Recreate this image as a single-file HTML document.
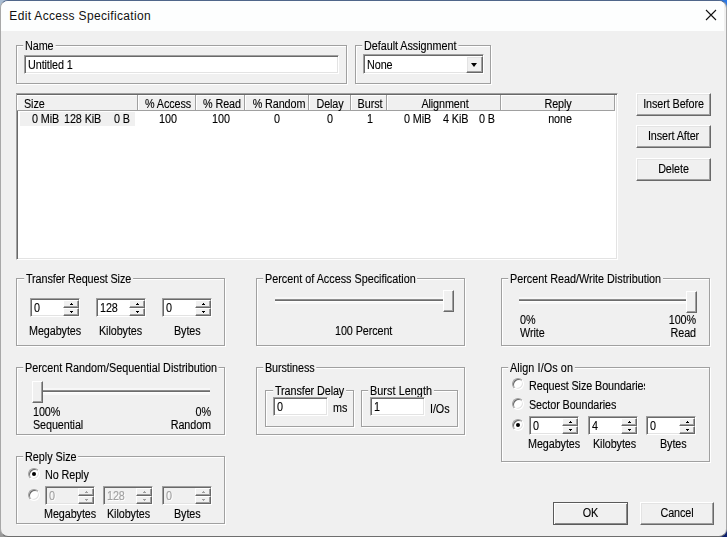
<!DOCTYPE html>
<html><head><meta charset="utf-8"><style>
html,body{margin:0;padding:0;width:727px;height:537px;overflow:hidden;}
body{background:#9a9a9a;position:relative;font-family:"Liberation Sans",sans-serif;}
.q{position:absolute;width:50%;height:50%;}
.win{position:absolute;left:0px;top:0px;width:725px;height:535px;border:1px solid;border-color:#50668a #a8a8a8 #6e6e6e #a8a8a8;border-radius:8px;background:#f0f0f0;overflow:hidden;}
.title{position:absolute;left:0;top:0;width:723px;height:30px;background:#fdfefe;}
.ttext{position:absolute;left:8.3px;top:7px;font-size:12px;line-height:16px;color:#111;letter-spacing:0.33px;white-space:nowrap;}
.abs{position:absolute;}
.t{position:absolute;font-size:12px;line-height:13px;white-space:nowrap;color:#000;letter-spacing:-0.1px;transform:scaleX(0.9);transform-origin:0 0;}
#c{-webkit-text-stroke:0.12px #000;}
#c .gray,#c .dis span{-webkit-text-stroke:0.12px #a0a0a0;}
.t.c{text-align:center;transform-origin:50% 0}.t.r{text-align:right;transform-origin:100% 0}
.grp{position:absolute;border:1px solid #a0a0a0;box-shadow:inset 1px 1px 0 #fff,1px 1px 0 #fff;}
.glab{position:absolute;background:#f0f0f0;padding:0 2px;font-size:12px;line-height:13px;white-space:nowrap;letter-spacing:-0.1px;transform:scaleX(0.9);transform-origin:2px 0;}
.edit{position:absolute;background:#fff;border-top:1px solid #a0a0a0;border-left:1px solid #a0a0a0;border-right:1px solid #fff;border-bottom:1px solid #fff;box-shadow:inset 1px 1px 0 #696969,inset -1px -1px 0 #e3e3e3;}
.edit>span{position:absolute;left:3px;top:3px;font-size:12px;line-height:13px;white-space:nowrap;letter-spacing:-0.1px;transform:scaleX(0.9);transform-origin:0 0;}
.edit.dis{background:#f0f0f0;}
.edit.dis>span{color:#a0a0a0;text-shadow:1px 1px 0 #fff;}
.sb{position:absolute;right:0px;width:14px;height:6px;background:#f0f0f0;border-top:1px solid #fff;border-left:1px solid #fff;border-right:1px solid #696969;border-bottom:1px solid #696969;box-shadow:inset -1px -1px 0 #a0a0a0;}
.sb.up{top:1px;}
.sb.dn{top:9px;}
.sb i{position:absolute;left:6.5px;width:1px;height:1px;background:#000;}
.sb.up i{top:2px;box-shadow:-1px 1px 0 #000,0 1px 0 #000,1px 1px 0 #000;}
.sb.dn i{top:3px;box-shadow:-1px -1px 0 #000,0 -1px 0 #000,1px -1px 0 #000;}
.edit.dis .sb.up i{background:#a0a0a0;box-shadow:-1px 1px 0 #a0a0a0,0 1px 0 #a0a0a0,1px 1px 0 #a0a0a0;}
.edit.dis .sb.dn i{background:#a0a0a0;box-shadow:-1px -1px 0 #a0a0a0,0 -1px 0 #a0a0a0,1px -1px 0 #a0a0a0;}
.btn{position:absolute;box-sizing:border-box;background:#f0f0f0;border-top:1px solid #fff;border-left:1px solid #fff;border-right:1px solid #696969;border-bottom:1px solid #696969;box-shadow:inset -1px -1px 0 #a0a0a0, inset 1px 1px 0 #e3e3e3;}
.btn.def{border:1px solid #5a5a5a;box-shadow:inset 1px 1px 0 #fff,inset -1px -1px 0 #8a8a8a;}
.btn>span{position:absolute;left:0;right:0;top:4px;text-align:center;font-size:12px;line-height:13px;letter-spacing:-0.1px;white-space:nowrap;transform:scaleX(0.9);transform-origin:50% 0;}
.radio{position:absolute;width:12px;height:12px;border-radius:50%;box-sizing:border-box;background:#fff;border:1px solid;border-color:#a0a0a0 #fff #fff #a0a0a0;box-shadow:inset 1px 1px 0 #696969, inset -1px -1px 0 #e3e3e3;}
.radio.chk::after{content:"";position:absolute;left:3px;top:3px;width:4px;height:4px;border-radius:50%;background:#000;}
.radio.dis{background:#fff;}
.track{position:absolute;height:2px;background:linear-gradient(#8e8e8e 50%,#6c6c6c 50%);border-bottom:1px solid #fff;box-shadow:0 2px 0 #f8f8f8,0 -2px 0 #f7f7f7;}
.thumb{position:absolute;width:9px;height:20px;background:#f0f0f0;border-top:1px solid #fff;border-left:1px solid #fff;border-right:1px solid #696969;border-bottom:1px solid #696969;box-shadow:inset -1px -1px 0 #a0a0a0;}
.lv{position:absolute;background:#fff;border-top:1px solid #a0a0a0;border-left:1px solid #a0a0a0;border-right:1px solid #fff;border-bottom:1px solid #fff;box-shadow:inset 1px 1px 0 #696969,inset -1px -1px 0 #e3e3e3;}
.hd{position:absolute;top:95px;height:15px;background:#f0f0f0;border-right:1px solid #a0a0a0;border-bottom:1px solid #a0a0a0;box-shadow:inset 1px 1px 0 #fff;}
.gray{color:#a0a0a0;}
</style></head><body>
<div class="q" style="left:0;top:0;background:#a9bdd3"></div><div class="q" style="right:0;top:0;background:#2b78e4"></div><div class="q" style="left:0;bottom:0;background:#9a9a9a"></div><div class="q" style="right:0;bottom:0;background:#0c1f6e"></div>
<div class="win">
<div class="title"><div class="ttext">Edit Access Specification</div>
<svg class="abs" style="left:704px;top:8px" width="12" height="12" viewBox="0 0 12 12"><path d="M1 1L11 11M11 1L1 11" stroke="#111" stroke-width="1.1" fill="none"/></svg>
</div>
</div>
<div id="c" style="position:absolute;left:0;top:0;width:727px;height:537px;will-change:transform;">

<div class="grp" style="left:16px;top:45px;width:329px;height:37px"></div>
<div class="glab" style="left:23.2px;top:40px;">Name</div>
<div class="edit " style="left:24px;top:55px;width:313px;height:17px"><span>Untitled 1</span></div>
<div class="grp" style="left:355px;top:45px;width:134px;height:37px"></div>
<div class="glab" style="left:362.4px;top:40px;letter-spacing:-0.04px;">Default Assignment</div>
<div class="edit" style="left:363px;top:54px;width:119px;height:18px"><span style="top:4px">None</span><div class="btn" style="left:auto;right:0px;top:1px;width:17px;height:17px;"></div><div class="abs" style="left:107px;top:8px;width:0;height:0;border-left:3.5px solid transparent;border-right:3.5px solid transparent;border-top:4px solid #000"></div></div>
<div class="lv" style="left:16px;top:93px;width:600px;height:165px"></div>
<div class="hd" style="left:17px;width:120px"></div>
<div class="t " style="left:24.2px;top:97.5px;">Size</div>
<div class="hd" style="left:138px;width:57px"></div>
<div class="t c " style="left:68.0px;top:97.5px;width:200px;">% Access</div>
<div class="hd" style="left:196px;width:48px"></div>
<div class="t c " style="left:122.0px;top:97.5px;width:200px;">% Read</div>
<div class="hd" style="left:245px;width:63px"></div>
<div class="t c " style="left:178.5px;top:97.5px;width:200px;">% Random</div>
<div class="hd" style="left:309px;width:41px"></div>
<div class="t c " style="left:230.0px;top:97.5px;width:200px;">Delay</div>
<div class="hd" style="left:351px;width:35px"></div>
<div class="t c " style="left:270.0px;top:97.5px;width:200px;">Burst</div>
<div class="hd" style="left:387px;width:113px"></div>
<div class="t c " style="left:345.0px;top:97.5px;width:200px;">Alignment</div>
<div class="hd" style="left:501px;width:113px"></div>
<div class="t c " style="left:458.0px;top:97.5px;width:200px;">Reply</div>
<div class="abs" style="left:20px;top:112px;width:115px;height:14px;background:#f0f0f0"></div>
<div class="t " style="left:31.7px;top:112.7px;">0 MiB</div>
<div class="t " style="left:63.9px;top:112.7px;">128 KiB</div>
<div class="t " style="left:113.9px;top:112.7px;">0 B</div>
<div class="t c " style="left:68.30000000000001px;top:112.7px;width:200px;">100</div>
<div class="t c " style="left:121.4px;top:112.7px;width:200px;">100</div>
<div class="t c " style="left:177.3px;top:112.7px;width:200px;">0</div>
<div class="t c " style="left:230.39999999999998px;top:112.7px;width:200px;">0</div>
<div class="t c " style="left:269.8px;top:112.7px;width:200px;">1</div>
<div class="t " style="left:403.8px;top:112.7px;">0 MiB</div>
<div class="t " style="left:443px;top:112.7px;">4 KiB</div>
<div class="t " style="left:479.3px;top:112.7px;">0 B</div>
<div class="t c " style="left:459.5px;top:112.7px;width:200px;">none</div>
<div class="btn" style="left:636px;top:93px;width:75px;height:23px"><span>Insert Before</span></div>
<div class="btn" style="left:636px;top:125px;width:75px;height:23px"><span>Insert After</span></div>
<div class="btn" style="left:636px;top:158px;width:75px;height:23px"><span>Delete</span></div>
<div class="grp" style="left:16px;top:278px;width:207px;height:66px"></div>
<div class="glab" style="left:24.1px;top:273px;">Transfer Request Size</div>
<div class="edit" style="left:30px;top:298px;width:48px;height:17px"><span>0</span><div class="sb up"><i></i></div><div class="sb dn"><i></i></div></div>
<div class="edit" style="left:96px;top:298px;width:48px;height:17px"><span>128</span><div class="sb up"><i></i></div><div class="sb dn"><i></i></div></div>
<div class="edit" style="left:162px;top:298px;width:48px;height:17px"><span>0</span><div class="sb up"><i></i></div><div class="sb dn"><i></i></div></div>
<div class="t " style="left:29px;top:324.7px;">Megabytes</div>
<div class="t " style="left:99.2px;top:324.7px;">Kilobytes</div>
<div class="t " style="left:174.3px;top:324.7px;">Bytes</div>
<div class="grp" style="left:256px;top:278px;width:207px;height:66px"></div>
<div class="glab" style="left:263.2px;top:273px;letter-spacing:0px;">Percent of Access Specification</div>
<div class="track" style="left:275px;top:299px;width:168px"></div>
<div class="thumb" style="left:443px;top:290px"></div>
<div class="t " style="left:335.3px;top:324.9px;">100 Percent</div>
<div class="grp" style="left:501px;top:278px;width:207px;height:66px"></div>
<div class="glab" style="left:508.2px;top:273px;letter-spacing:0px;">Percent Read/Write Distribution</div>
<div class="track" style="left:519px;top:299px;width:168px"></div>
<div class="thumb" style="left:686px;top:291px"></div>
<div class="t " style="left:519.5px;top:314.4px;">0%</div>
<div class="t " style="left:519.5px;top:327.1px;">Write</div>
<div class="t r " style="left:496.20000000000005px;top:314.4px;width:200px;">100%</div>
<div class="t r " style="left:496.20000000000005px;top:327.4px;width:200px;">Read</div>
<div class="grp" style="left:16px;top:367px;width:207px;height:66px"></div>
<div class="glab" style="left:23.2px;top:362px;letter-spacing:0px;">Percent Random/Sequential Distribution</div>
<div class="track" style="left:33px;top:390px;width:177px"></div>
<div class="thumb" style="left:32px;top:381px"></div>
<div class="t " style="left:32.8px;top:405.7px;">100%</div>
<div class="t " style="left:32.8px;top:418.7px;">Sequential</div>
<div class="t r " style="left:10.800000000000011px;top:405.7px;width:200px;">0%</div>
<div class="t r " style="left:10.800000000000011px;top:418.7px;width:200px;">Random</div>
<div class="grp" style="left:256px;top:367px;width:207px;height:66px"></div>
<div class="glab" style="left:263.4px;top:362px;">Burstiness</div>
<div class="grp" style="left:265px;top:390px;width:87px;height:35px"></div>
<div class="glab" style="left:272.6px;top:385px;">Transfer Delay</div>
<div class="edit " style="left:273px;top:397px;width:53px;height:17px"><span>0</span></div>
<div class="t " style="left:332.7px;top:402.2px;">ms</div>
<div class="grp" style="left:361px;top:390px;width:95px;height:35px"></div>
<div class="glab" style="left:368.2px;top:385px;letter-spacing:0.08px;">Burst Length</div>
<div class="edit " style="left:370px;top:397px;width:53px;height:17px"><span>1</span></div>
<div class="t " style="left:429.6px;top:402.5px;">I/Os</div>
<div class="grp" style="left:501px;top:367px;width:207px;height:93px"></div>
<div class="glab" style="left:508px;top:362px;letter-spacing:0.1px;">Align I/Os on</div>
<div class="radio" style="left:512px;top:378px"></div>
<div class="t " style="left:529.3px;top:379.8px;width:129px;overflow:hidden">Request Size Boundaries</div>
<div class="radio" style="left:512px;top:398px"></div>
<div class="t " style="left:529.3px;top:398.7px;">Sector Boundaries</div>
<div class="radio chk" style="left:512px;top:419px"></div>
<div class="edit" style="left:529px;top:416px;width:48px;height:17px"><span>0</span><div class="sb up"><i></i></div><div class="sb dn"><i></i></div></div>
<div class="edit" style="left:588px;top:416px;width:48px;height:17px"><span>4</span><div class="sb up"><i></i></div><div class="sb dn"><i></i></div></div>
<div class="edit" style="left:646px;top:416px;width:48px;height:17px"><span>0</span><div class="sb up"><i></i></div><div class="sb dn"><i></i></div></div>
<div class="t " style="left:528.3px;top:437.6px;">Megabytes</div>
<div class="t " style="left:592.8px;top:437.6px;">Kilobytes</div>
<div class="t " style="left:660px;top:437.7px;">Bytes</div>
<div class="grp" style="left:16px;top:456px;width:207px;height:66px"></div>
<div class="glab" style="left:23.2px;top:451px;letter-spacing:0px;">Reply Size</div>
<div class="radio chk" style="left:28px;top:468px"></div>
<div class="t " style="left:44.8px;top:468.8px;">No Reply</div>
<div class="radio dis" style="left:28px;top:489px"></div>
<div class="edit dis" style="left:45px;top:486px;width:48px;height:17px"><span>0</span><div class="sb up"><i></i></div><div class="sb dn"><i></i></div></div>
<div class="edit dis" style="left:103px;top:486px;width:48px;height:17px"><span>128</span><div class="sb up"><i></i></div><div class="sb dn"><i></i></div></div>
<div class="edit dis" style="left:162px;top:486px;width:48px;height:17px"><span>0</span><div class="sb up"><i></i></div><div class="sb dn"><i></i></div></div>
<div class="t " style="left:43.7px;top:507.6px;">Megabytes</div>
<div class="t " style="left:107px;top:507.6px;">Kilobytes</div>
<div class="t " style="left:174px;top:507.6px;">Bytes</div>
<div class="btn def" style="left:553px;top:502px;width:75px;height:23px"><span>OK</span></div>
<div class="btn" style="left:640px;top:502px;width:74px;height:23px"><span>Cancel</span></div>
</div></body></html>
